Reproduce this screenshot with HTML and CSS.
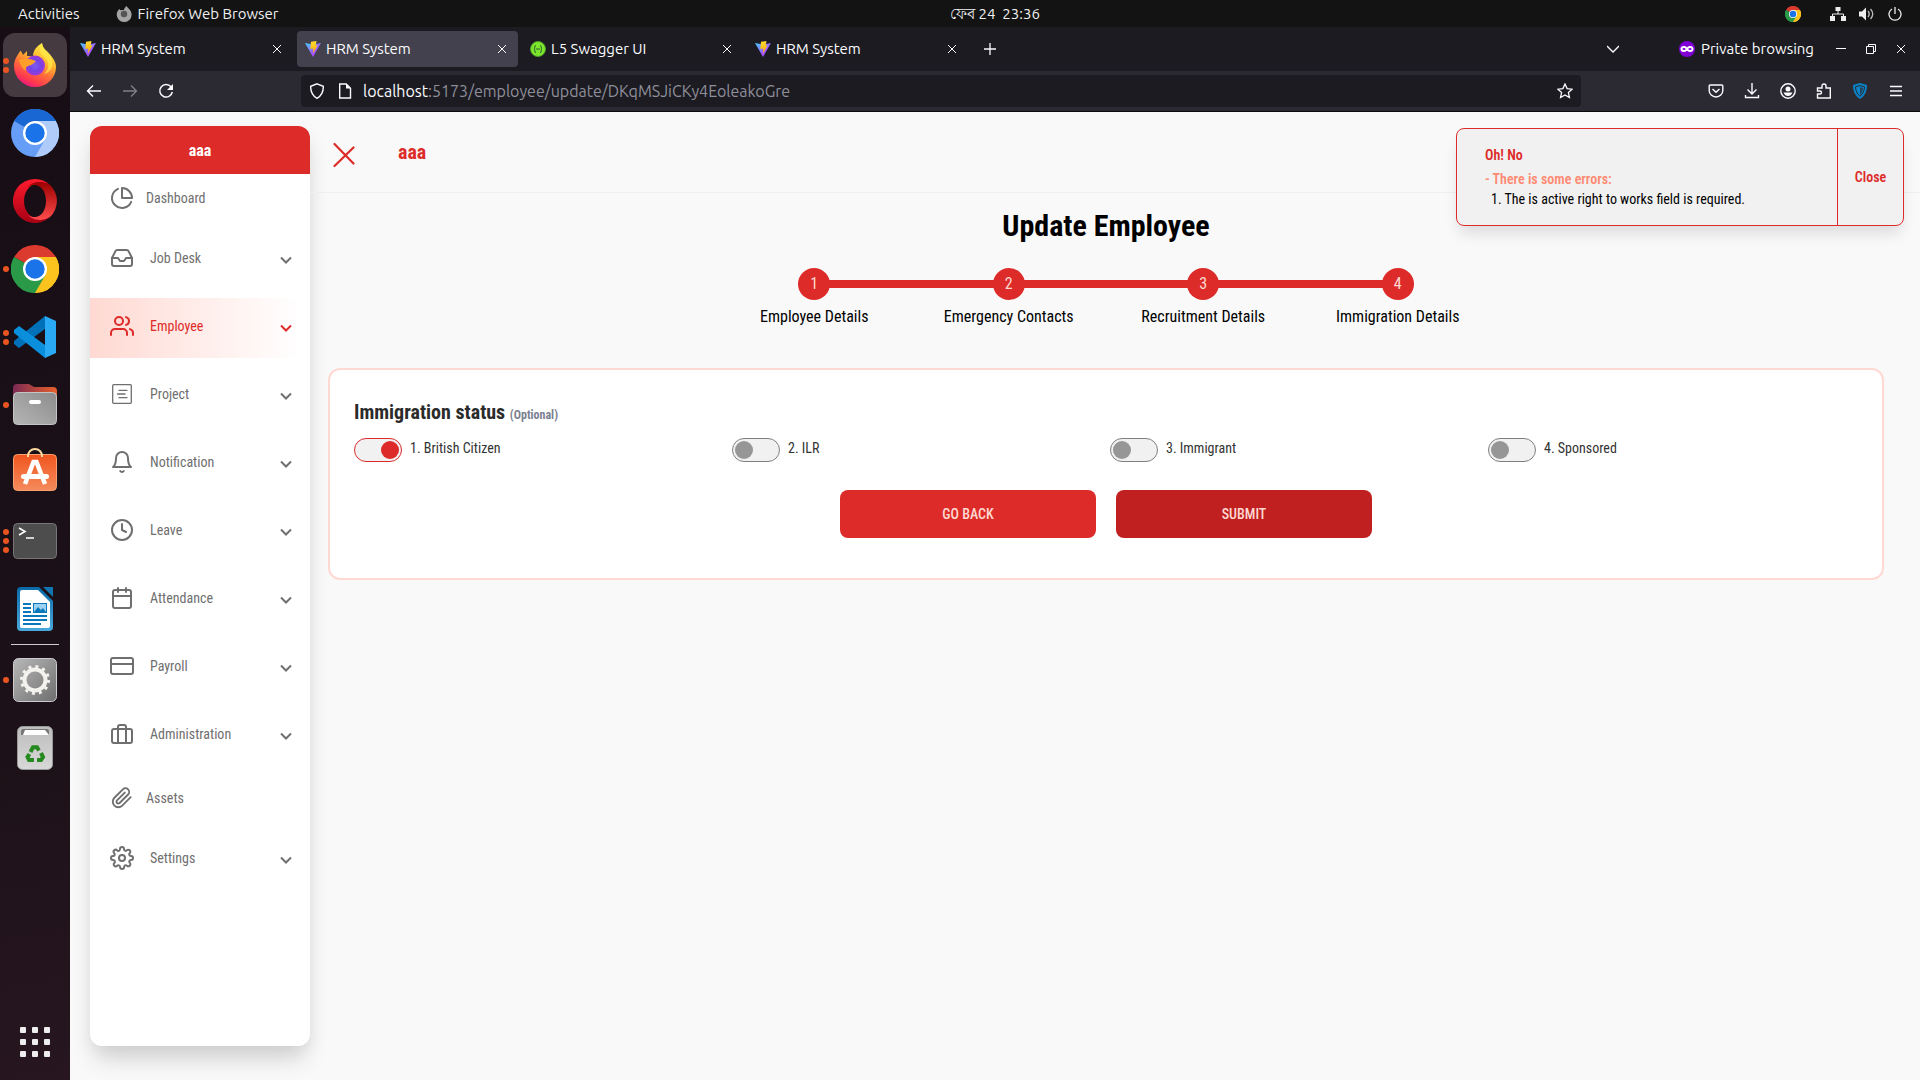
FILE: index.html
```html
<!DOCTYPE html>
<html lang="en">
<head>
<meta charset="utf-8">
<title>HRM System</title>
<link rel="stylesheet" href="styles.css">
</head>
<body>
<svg class="defs" aria-hidden="true">
  <defs>
    <linearGradient id="vg" x1="0" y1="0" x2="1" y2="1"><stop offset="0" stop-color="#41d1ff"/><stop offset=".6" stop-color="#a259ff"/><stop offset="1" stop-color="#bd34fe"/></linearGradient>
    <linearGradient id="vy" x1="0" y1="0" x2="0" y2="1"><stop offset="0" stop-color="#ffdd35"/><stop offset="1" stop-color="#ffa800"/></linearGradient>
    <linearGradient id="fx" x1=".8" y1="0" x2=".3" y2="1"><stop offset="0" stop-color="#fff44f"/><stop offset=".35" stop-color="#ffbd2e"/><stop offset=".6" stop-color="#ff7139"/><stop offset=".85" stop-color="#ff3750"/><stop offset="1" stop-color="#e31587"/></linearGradient>
    <radialGradient id="fp"><stop offset="0" stop-color="#7a5cf0"/><stop offset=".6" stop-color="#7542e5"/><stop offset="1" stop-color="#a237d8"/></radialGradient>
    <linearGradient id="op" x1="0" y1="0" x2="0" y2="1"><stop offset="0" stop-color="#ff1b2d"/><stop offset="1" stop-color="#a70014"/></linearGradient>
    <linearGradient id="op2" x1="0" y1="0" x2="0" y2="1"><stop offset="0" stop-color="#9c0000"/><stop offset="1" stop-color="#ff4b4b"/></linearGradient>
    <linearGradient id="grey" x1="0" y1="0" x2="1" y2="1"><stop offset="0" stop-color="#b8b8b8"/><stop offset="1" stop-color="#6e6e6e"/></linearGradient>
    <linearGradient id="fold" x1="0" y1="0" x2="1" y2="0"><stop offset="0" stop-color="#7b2a55"/><stop offset="1" stop-color="#e9602a"/></linearGradient>
    <linearGradient id="fold2" x1="1" y1="0" x2="0" y2="1"><stop offset="0" stop-color="#8c8c8c"/><stop offset="1" stop-color="#b5b5b5"/></linearGradient>
    <linearGradient id="store" x1="0" y1="0" x2="0" y2="1"><stop offset="0" stop-color="#f0561f"/><stop offset="1" stop-color="#f58a5c"/></linearGradient>
    <linearGradient id="doc" x1="0" y1="0" x2="0" y2="1"><stop offset="0" stop-color="#0a6aa8"/><stop offset="1" stop-color="#4aa9dc"/></linearGradient>
    <linearGradient id="bin" x1="0" y1="0" x2="0" y2="1"><stop offset="0" stop-color="#bdbdbd"/><stop offset="1" stop-color="#d8d8d8"/></linearGradient>
    <symbol id="vite" viewBox="0 0 16 16"><path d="M0 2 8 16 16 2 8 3.5z" fill="url(#vg)"/><path d="M6 .8 11.5 0 10.7 4.6 12.6 4.300 8 12.500 8.300 7.500 5.300 8z" fill="url(#vy)"/></symbol>
    <symbol id="x" viewBox="0 0 10 10"><path d="M1 1l8 8M9 1 1 9" fill="none" stroke="currentColor" stroke-width="1"/></symbol>
    <symbol id="down" viewBox="0 0 12 8"><path d="M1 1.500 6 6.500l5-5" fill="none" stroke="currentColor" stroke-width="2"/></symbol>
    <symbol id="chrome" viewBox="0 0 48 48"><path d="M24 24 3.200 12A24 24 0 0 1 44.800 12z" fill="#db3a2e"/><path d="M24 24 44.800 12A24 24 0 0 1 24 48z" fill="#fcc31e"/><path d="M24 24 24 48A24 24 0 0 1 3.200 12z" fill="#2a9a49"/><path d="M24 12H44.800A24 24 0 0 1 24 48L34.400 30z" fill="#fcc31e"/><path d="M13.600 30 3.200 12A24 24 0 0 0 24 48L34.400 30z" fill="#2a9a49"/><circle cx="24" cy="24" r="12" fill="#fff"/><circle cx="24" cy="24" r="9.700" fill="#1a73e8"/></symbol>
  </defs>
</svg>

<header class="topbar">
  <div class="topbar-left">
    <span>Activities</span>
    <span class="topbar-app">
      <svg width="16" height="16" viewBox="0 0 42 44"><path d="M21 44A20 20 0 0 1 1 23C1 16 5 12 8 8l3 4c4-1 7-1 10 0C21 7 24 3 28 0c3 6 14 12 14 24a20 20 0 0 1-21 20z" fill="#a5a5a5"/><circle cx="21" cy="22" r="9" fill="#555"/></svg>
      Firefox Web Browser
    </span>
  </div>
  <time class="clock">ফেব 24&nbsp; 23:36</time>
  <div class="topbar-right">
    <svg class="tray-chrome" width="16" height="16"><use href="#chrome"/></svg>
    <svg width="16" height="14" viewBox="0 0 16 14"><path d="M5.500 0h5v4h-5zM0 9h5v5H0zM11 9h5v5h-5z" fill="#eee"/><path d="M8 4v3M2.500 9V7h11v2" fill="none" stroke="#eee"/></svg>
    <svg width="16" height="14" viewBox="0 0 16 14"><path d="M0 4.500h3L7 .5v13l-4-4H0z" fill="#eee"/><path d="M9 4q2.500 3 0 6M11.500 2q4.500 5 0 10" fill="none" stroke="#bbb" stroke-width="1.300"/></svg>
    <svg width="14" height="14" viewBox="0 0 14 14"><path d="M4 2a6 6 0 1 0 6 0M7 0v7" fill="none" stroke="#eee" stroke-width="1.300"/></svg>
  </div>
</header>

<div class="desktop">
  <nav class="dock" aria-label="Dock">
    <a class="dock-item active" href="#" aria-label="Firefox"><span class="dots"><i></i><i></i></span>
      <svg width="42" height="44" viewBox="0 0 42 44"><path d="M21 44A21 21 0 0 1 0 23C0 16 4 12 6.500 7.500c1 1.500 2 3 2.500 4.500L13 8v5c2 0 4 0 6 1C19 7 23 3 28 0c1 7 6 9 10 14 3 4 4 7 4 10a21 20 0 0 1-21 20z" fill="url(#fx)"/><circle cx="21" cy="22.500" r="10" fill="url(#fp)"/><path d="M5 17q8-3 17 1-3 4-8 5-3 1-2 5-5-3-7-11z" fill="#ff9f2a"/><path d="M28 0c-4 5-2 10 3 15s4 12-1 16c9-2 10-12 7-18S29 7 28 0z" fill="#ffe94a" opacity=".7"/></svg></a>
    <a class="dock-item" href="#" aria-label="Chromium">
      <svg width="48" height="48" viewBox="0 0 48 48"><circle cx="24" cy="24" r="24" fill="#669df6"/><path d="M24 12H44.800A24 24 0 0 1 24 48L34.400 30z" fill="#aecbfa"/><path d="M24 24 3.200 12A24 24 0 0 1 44.800 12H24L14 30z" fill="#1967d2"/><circle cx="24" cy="24" r="12" fill="#fff"/><circle cx="24" cy="24" r="9.700" fill="#1a73e8"/></svg></a>
    <a class="dock-item" href="#" aria-label="Opera">
      <svg width="44" height="44" viewBox="0 0 44 44"><path d="M22 0a22 22 0 1 0 15 38c-12 7-26-1-26-16S25-1 37 6A22 22 0 0 0 22 0z" fill="url(#op)"/><path d="M15 8c4-5 14-7 22-2a22 22 0 0 1 0 32c-8 5-18 3-22-2 10 6 18-2 18-14S25 2 15 8z" fill="url(#op2)"/></svg></a>
    <a class="dock-item" href="#" aria-label="Chrome"><span class="dots"><i></i></span>
      <svg width="48" height="48"><use href="#chrome"/></svg></a>
    <a class="dock-item" href="#" aria-label="Visual Studio Code"><span class="dots"><i></i><i></i></span>
      <svg width="42" height="42" viewBox="0 0 42 42"><path d="M31 0v13L5 32 0 28v-3z" fill="#0070b8"/><path d="M0 14l5-4 26 19v13L0 17z" fill="#0a8fdc"/><path d="M31 0l11 5v32l-11 5z" fill="#2aaaf5"/></svg></a>
    <a class="dock-item" href="#" aria-label="Files"><span class="dots"><i></i></span>
      <svg width="44" height="42" viewBox="0 0 44 42"><path d="M0 4a4 4 0 0 1 4-4h12l5 3h19a4 4 0 0 1 4 4v10H0z" fill="url(#fold)"/><rect x=".5" y="8.500" width="43" height="32" rx="4" fill="url(#fold2)" stroke="#c4c4c4"/><rect x="16" y="16" width="12" height="4" rx="2" fill="#fff"/></svg></a>
    <a class="dock-item" href="#" aria-label="Software">
      <svg width="44" height="50" viewBox="0 0 44 50"><rect x=".5" y="6.500" width="43" height="36" rx="4" fill="url(#store)" stroke="#f9a06f"/><path d="M15 9V8a7 7 0 0 1 14 0v1" fill="none" stroke="#fbdba0" stroke-width="2"/><path d="M12 36 20.500 14h3L32 36" fill="none" stroke="#fff" stroke-width="4.500"/><rect x="8" y="26" width="28" height="5" rx="2.500" fill="#fff"/></svg></a>
    <a class="dock-item" href="#" aria-label="Terminal"><span class="dots"><i></i><i></i><i></i></span>
      <svg width="44" height="36" viewBox="0 0 44 36"><rect x=".5" y=".5" width="43" height="35" rx="4" fill="#4d4d4d" stroke="#777"/><path d="M6 5l6 3.500L6 12M13 15h8" fill="none" stroke="#fff" stroke-width="1.600"/></svg></a>
    <a class="dock-item" href="#" aria-label="Writer">
      <svg width="36" height="44" viewBox="0 0 36 44"><path d="M4 0h18l14 14v26a4 4 0 0 1-4 4H4a4 4 0 0 1-4-4V4a4 4 0 0 1 4-4z" fill="url(#doc)"/><path d="M26 0h10v10z" fill="#1275b0"/><path d="M3 5a2 2 0 0 1 2-2h16l12 12v24a2 2 0 0 1-2 2H5a2 2 0 0 1-2-2z" fill="#fff"/><path d="M6 17h8M6 21h8M6 25h8M6 29h24M6 33h24M6 37h18" stroke="#0a78bb" stroke-width="2"/><rect x="16.500" y="16.500" width="13" height="9" fill="#9dd2f2" stroke="#0a78bb"/><path d="M17 25l4-5 3 3 2-2 3 4z" fill="#0a78bb"/></svg></a>
    <hr class="dock-rule">
    <a class="dock-item" href="#" aria-label="Settings"><span class="dots"><i></i></span>
      <svg width="44" height="44" viewBox="0 0 44 44"><rect x=".5" y=".5" width="43" height="43" rx="5" fill="url(#grey)" stroke="#ccc"/><circle cx="22" cy="22" r="10.500" fill="none" stroke="#f4f2ee" stroke-width="4"/><circle cx="22" cy="22" r="13.500" fill="none" stroke="#f4f2ee" stroke-width="3" stroke-dasharray="3 4.070"/></svg></a>
    <a class="dock-item" href="#" aria-label="Trash">
      <svg width="36" height="44" viewBox="0 0 36 44"><rect x=".5" y=".5" width="35" height="43" rx="5" fill="url(#bin)" stroke="#999"/><path d="M4 9V5q0-2 2-2h24q2 0 2 2v4z" fill="#777"/><path d="M6 9l2-5h20l4 5z" fill="#fff"/><g fill="none" stroke="#26891f" stroke-width="4"><path d="M13.500 26l2.500-4.800h4l2 3.300M24 27l2 4-2 3h-4M17 34h-5L10.500 31l2-3"/></g></svg></a>
    <a class="dock-apps" href="#" aria-label="Show applications">
      <svg width="30" height="30" viewBox="0 0 30 30" fill="#eee"><g id="r"><rect width="6" height="6" rx="1"/><rect x="12" width="6" height="6" rx="1"/><rect x="24" width="6" height="6" rx="1"/></g><use href="#r" y="12"/><use href="#r" y="24"/></svg></a>
  </nav>

  <div class="browser">
    <div class="tabs">
      <div class="tab"><svg width="16" height="16"><use href="#vite"/></svg><span>HRM System</span><button aria-label="Close tab"><svg width="10" height="10"><use href="#x"/></svg></button></div>
      <div class="tab selected"><svg width="16" height="16"><use href="#vite"/></svg><span>HRM System</span><button aria-label="Close tab"><svg width="10" height="10"><use href="#x"/></svg></button></div>
      <div class="tab"><svg width="16" height="16" viewBox="0 0 16 16"><circle cx="8" cy="8" r="7.500" fill="#7be62c" stroke="#4f9f2a"/><path d="M6 4.500Q4.800 4.500 4.800 6T4 8q.8 0 .8 2T6 11.500M10 4.500q1.200 0 1.200 1.500T12 8q-.8 0-.8 2T10 11.500M6 8h4" fill="none" stroke="#2f5f2a"/></svg><span>L5 Swagger UI</span><button aria-label="Close tab"><svg width="10" height="10"><use href="#x"/></svg></button></div>
      <div class="tab"><svg width="16" height="16"><use href="#vite"/></svg><span>HRM System</span><button aria-label="Close tab"><svg width="10" height="10"><use href="#x"/></svg></button></div>
      <button class="new-tab" aria-label="New tab"><svg width="12" height="12" viewBox="0 0 12 12"><path d="M6 0v12M0 6h12" stroke="currentColor" stroke-width="1.300"/></svg></button>
      <div class="window-tools">
        <button class="list-tabs" aria-label="List all tabs"><svg width="12" height="8" viewBox="0 0 12 8"><path d="M0 1l6 6 6-6" fill="none" stroke="currentColor" stroke-width="1.300"/></svg></button>
        <span class="private"><svg width="16" height="16" viewBox="0 0 16 16"><circle cx="8" cy="8" r="8" fill="#8000d7"/><path d="M1.500 8c0-3 4-4 6.500-1.500C10.500 4 14.500 5 14.500 8S11 12 8 9.800C5 12 1.500 11 1.500 8z" fill="#fff"/><ellipse cx="5" cy="8" rx="1.600" ry="1" fill="#8000d7"/><ellipse cx="11" cy="8" rx="1.600" ry="1" fill="#8000d7"/></svg>Private browsing</span>
        <button aria-label="Minimize"><svg width="10" height="10" viewBox="0 0 10 10"><path d="M0 4.500h10" stroke="currentColor"/></svg></button>
        <button aria-label="Restore"><svg width="10" height="10" viewBox="0 0 10 10"><path d="M.5 2.500h7v7h-7zM2.500 2.500v-2h7v7h-2" fill="none" stroke="currentColor"/></svg></button>
        <button aria-label="Close window"><svg width="10" height="10"><use href="#x"/></svg></button>
      </div>
    </div>

    <div class="navbar">
      <div class="nav-buttons">
        <button aria-label="Back"><svg width="16" height="14" viewBox="0 0 16 14"><path d="M15 7H1.500M7 1.500 1.500 7 7 12.500" fill="none" stroke="currentColor" stroke-width="1.400"/></svg></button>
        <button class="dim" aria-label="Forward"><svg width="16" height="14" viewBox="0 0 16 14"><path d="M1 7h13.500M9 1.500 14.500 7 9 12.500" fill="none" stroke="currentColor" stroke-width="1.400"/></svg></button>
        <button aria-label="Reload"><svg width="16" height="16" viewBox="0 0 16 16"><path d="M13 3.800A6.300 6.300 0 1 0 14.300 9" fill="none" stroke="currentColor" stroke-width="1.500"/><path d="M15 1v6H9z" fill="currentColor"/></svg></button>
      </div>
      <div class="urlbar">
        <svg width="16" height="16" viewBox="0 0 16 16"><path d="M8 .8l6.300 2.500c.2 5.500-1.800 9.500-6.300 12-4.500-2.500-6.500-6.500-6.300-12z" fill="none" stroke="currentColor" stroke-width="1.400"/></svg>
        <svg width="16" height="16" viewBox="0 0 16 16"><path d="M2.700 1h6.500l4.300 4.300V15H2.700z" fill="none" stroke="currentColor" stroke-width="1.400"/><path d="M9 .5v5h5z" fill="currentColor"/></svg>
        <span class="url">localhost<span>:5173/employee/update/DKqMSJiCKy4EoleakoGre</span></span>
        <svg width="16" height="16" viewBox="0 0 16 16"><path d="M8 1l2.100 4.600 5 .6-3.700 3.400 1 4.900L8 12l-4.400 2.500 1-4.900L.9 6.200l5-.6z" fill="none" stroke="currentColor" stroke-width="1.300"/></svg>
      </div>
      <div class="extensions">
        <button aria-label="Pocket"><svg width="16" height="16" viewBox="0 0 16 16"><path d="M1.200 3q0-1 1-1h11.600q1 0 1 1v4.500a6.800 6.500 0 0 1-13.600 0zM4.500 6 8 9.300 11.500 6" fill="none" stroke="currentColor" stroke-width="1.400"/></svg></button>
        <button aria-label="Downloads"><svg width="16" height="16" viewBox="0 0 16 16"><path d="M8 0v10.500M3.500 6.500 8 11l4.500-4.500M1.500 12v2.500h13V12" fill="none" stroke="currentColor" stroke-width="1.400"/></svg></button>
        <button aria-label="Account"><svg width="16" height="16" viewBox="0 0 16 16"><circle cx="8" cy="8" r="7.200" fill="none" stroke="currentColor" stroke-width="1.400"/><circle cx="8" cy="6" r="2.500" fill="currentColor"/><path d="M3.500 9.500h9Q11 13 8 13T3.500 9.500z" fill="currentColor"/></svg></button>
        <button aria-label="Extensions"><svg width="16" height="16" viewBox="0 0 16 16"><path d="M1.500 5H6V3q0-2 2-2t2 2v2h4.300v10H1.500v-4H4q1.500 0 1.500-1.500T4 8H1.500z" fill="none" stroke="currentColor" stroke-width="1.400"/></svg></button>
        <button aria-label="Security shield"><svg width="16" height="16" viewBox="0 0 16 16"><path d="M8 0l7 2c0 6-2 11-7 14C3 13 1 8 1 2z" fill="#0a84c8"/><path d="M8 2.500l4.500 1.300C12.300 8 11 11 8 13.300 5 11 3.700 8 3.500 3.800z" fill="none" stroke="#2b2a33"/><path d="M8 4v8Q10.500 10 11 5z" fill="#2b2a33" opacity=".7"/></svg></button>
        <button aria-label="Menu"><svg width="12" height="12" viewBox="0 0 12 12"><path d="M0 1.500h12M0 6h12M0 10.500h12" stroke="currentColor" stroke-width="1.400"/></svg></button>
      </div>
    </div>

    <div class="app">
      <aside class="sidebar">
        <div class="brand">aaa</div>
        <nav class="menu" aria-label="Main">
          <a class="menu-link" href="#"><svg class="ico" viewBox="0 0 24 24"><path d="M21.200 15.900A10 10 0 1 1 8 2.800M22 12A10 10 0 0 0 12 2v10z"/></svg>Dashboard</a>
          <button class="menu-group"><svg class="ico" viewBox="0 0 24 24"><path d="M22 12h-6l-2 3h-4l-2-3H2"/><path d="M5.450 5.110 2 12v6a2 2 0 0 0 2 2h16a2 2 0 0 0 2-2v-6l-3.450-6.890A2 2 0 0 0 16.760 4H7.240a2 2 0 0 0-1.790 1.110z"/></svg><span>Job Desk</span><svg class="caret"><use href="#down"/></svg></button>
          <button class="menu-group current"><svg class="ico" viewBox="0 0 24 24"><path d="M17 21v-2a4 4 0 0 0-4-4H5a4 4 0 0 0-4 4v2"/><circle cx="9" cy="7" r="4"/><path d="M23 21v-2a4 4 0 0 0-3-3.870M16 3.130a4 4 0 0 1 0 7.750"/></svg><span>Employee</span><svg class="caret"><use href="#down"/></svg></button>
          <button class="menu-group"><svg class="ico thin" viewBox="0 0 24 24"><rect x="2.700" y="2.700" width="18.600" height="18.600" rx="1"/><path d="M9 8.300h8M7.500 12H15M9 15.700h8"/></svg><span>Project</span><svg class="caret"><use href="#down"/></svg></button>
          <button class="menu-group"><svg class="ico" viewBox="0 0 24 24"><path d="M18 8A6 6 0 0 0 6 8c0 7-3 9-3 9h18s-3-2-3-9M13.730 21a2 2 0 0 1-3.460 0"/></svg><span>Notification</span><svg class="caret"><use href="#down"/></svg></button>
          <button class="menu-group"><svg class="ico" viewBox="0 0 24 24"><circle cx="12" cy="12" r="10"/><path d="M12 6v6l4 2"/></svg><span>Leave</span><svg class="caret"><use href="#down"/></svg></button>
          <button class="menu-group"><svg class="ico" viewBox="0 0 24 24"><rect x="3" y="4" width="18" height="18" rx="2"/><path d="M16 2v4M8 2v4M3 10h18"/></svg><span>Attendance</span><svg class="caret"><use href="#down"/></svg></button>
          <button class="menu-group"><svg class="ico" viewBox="0 0 24 24"><rect x="1" y="4" width="22" height="16" rx="2"/><path d="M1 10h22"/></svg><span>Payroll</span><svg class="caret"><use href="#down"/></svg></button>
          <button class="menu-group"><svg class="ico" viewBox="0 0 24 24"><rect x="2" y="7" width="20" height="14" rx="2"/><path d="M16 21V5a2 2 0 0 0-2-2h-4a2 2 0 0 0-2 2v16"/></svg><span>Administration</span><svg class="caret"><use href="#down"/></svg></button>
          <a class="menu-link" href="#"><svg class="ico" viewBox="-1 -1 26 26"><path d="M21.440 11.050l-9.190 9.190a6 6 0 0 1-8.490-8.490l9.190-9.190a4 4 0 0 1 5.660 5.660l-9.200 9.190a2 2 0 0 1-2.830-2.830l8.490-8.480"/></svg>Assets</a>
          <button class="menu-group"><svg class="ico" viewBox="0 0 24 24"><circle cx="12" cy="12" r="3"/><path d="M19.400 15a1.650 1.650 0 0 0 .33 1.820l.06.06a2 2 0 1 1-2.830 2.830l-.06-.06a1.650 1.650 0 0 0-2.800 1.170V21a2 2 0 0 1-4 0v-.09A1.650 1.650 0 0 0 9 19.400a1.650 1.650 0 0 0-1.820.33l-.06.06a2 2 0 1 1-2.830-2.830l.06-.06A1.650 1.650 0 0 0 3.180 14H3a2 2 0 0 1 0-4h.09A1.650 1.650 0 0 0 4.600 9a1.650 1.650 0 0 0-.33-1.820l-.06-.06a2 2 0 1 1 2.830-2.830l.06.06A1.650 1.650 0 0 0 10 3.180V3a2 2 0 0 1 4 0v.09a1.650 1.650 0 0 0 2.820 1.260l.06-.06a2 2 0 1 1 2.830 2.830l-.06.06A1.650 1.650 0 0 0 20.820 10H21a2 2 0 0 1 0 4h-.09a1.650 1.650 0 0 0-1.510 1z"/></svg><span>Settings</span><svg class="caret"><use href="#down"/></svg></button>
        </nav>
      </aside>

      <div class="page">
        <header class="page-head">
          <button class="menu-close" aria-label="Close menu"><svg width="22" height="26" viewBox="0 0 22 26"><path d="M1.500 2l19 19.500M20.500 5.500 1.500 24" fill="none" stroke="currentColor" stroke-width="2.200" stroke-linecap="round"/></svg></button>
          <span class="company">aaa</span>
        </header>
        <main class="content">
          <h1>Update Employee</h1>
          <ol class="steps">
            <li><b>1</b><span>Employee Details</span></li>
            <li><b>2</b><span>Emergency Contacts</span></li>
            <li><b>3</b><span>Recruitment Details</span></li>
            <li><b>4</b><span>Immigration Details</span></li>
          </ol>
          <form class="card">
            <h2>Immigration status <small>(Optional)</small></h2>
            <div class="options">
              <label class="option"><input type="checkbox" checked><span>1. British Citizen</span></label>
              <label class="option"><input type="checkbox"><span>2. ILR</span></label>
              <label class="option"><input type="checkbox"><span>3. Immigrant</span></label>
              <label class="option"><input type="checkbox"><span>4. Sponsored</span></label>
            </div>
            <div class="actions">
              <button type="button">GO BACK</button>
              <button type="button" class="submit">SUBMIT</button>
            </div>
          </form>
        </main>
      </div>

      <div class="toast" role="alert">
        <div class="toast-body">
          <strong>Oh! No</strong>
          <p>- There is some errors:</p>
          <div class="toast-error">1. The is active right to works field is required.</div>
        </div>
        <button>Close</button>
      </div>
    </div>
  </div>
</div>
</body>
</html>
```

FILE: styles.css
```css
* { box-sizing: border-box; }

body {
  margin: 0;
  min-height: 100vh;
  display: flex;
  flex-direction: column;
  background: #f9f9f9;
  color: #000;
  font: 16px/24px "Roboto Condensed", "Liberation Sans Narrow", Roboto, sans-serif;
}

button {
  padding: 0;
  border: 0;
  background: none;
  color: inherit;
  font: inherit;
  cursor: pointer;
}

a { color: inherit; text-decoration: none; }
svg { display: block; flex: none; }
.defs { position: absolute; width: 0; height: 0; }

/* system bar */
.topbar {
  display: grid;
  grid-template-columns: 1fr auto 1fr;
  align-items: center;
  height: 27px;
  padding: 0 12px 0 18px;
  background: #131313;
  color: #f0f0f0;
  font: 15px/20px Ubuntu, "Noto Sans", sans-serif;
}
.topbar-left { display: flex; gap: 36px; }
.topbar-app { display: flex; align-items: center; gap: 6px; }
.clock { padding-left: 64px; white-space: nowrap; }
.topbar-right { display: flex; justify-content: flex-end; align-items: center; gap: 13px; padding-right: 6px; }
.tray-chrome { margin-right: 16px; }

.desktop { display: flex; flex: 1; }

/* dock */
.dock {
  flex: none;
  width: 70px;
  display: flex;
  flex-direction: column;
  padding-top: 4px;
  background: linear-gradient(170deg, #170d14 0%, #1c1118 65%, #27161f 100%);
}
.dock-item {
  position: relative;
  display: grid;
  place-items: center;
  height: 64px;
  margin: 2px 3px;
  border-radius: 12px;
}
.dock-item.active { background: #453a40; }
.dots {
  position: absolute;
  left: 0;
  top: 0;
  bottom: 0;
  display: flex;
  flex-direction: column;
  justify-content: center;
  gap: 3px;
}
.dots i { width: 6px; height: 6px; border-radius: 50%; background: #e95420; }
.dock-rule { width: 48px; height: 1px; margin: 1px auto; border: 0; background: #cfcacd; }
.dock-apps { margin: auto auto 23px; }

/* browser chrome */
.browser { flex: 1; min-width: 0; display: flex; flex-direction: column; }
.tabs, .navbar { display: flex; align-items: center; color: #fbfbfe; font: 15px/20px Ubuntu, "Noto Sans", sans-serif; }
.tabs { height: 44px; padding: 0 14px 0 2px; gap: 4px; background: #1c1b22; }
.tab { display: flex; align-items: center; gap: 5px; width: 221px; height: 36px; padding: 0 11px 0 8px; border-radius: 4px; }
.tab span { flex: 1; white-space: nowrap; }
.tab.selected { background: #42414d; }
.new-tab { width: 36px; display: grid; place-items: center; }
.window-tools { display: flex; align-items: center; gap: 20px; margin-left: auto; }
.list-tabs { margin-right: 40px; }
.private { display: flex; align-items: center; gap: 6px; margin-right: 2px; }

.navbar { height: 41px; padding-right: 16px; background: #2b2a33; border-bottom: 1px solid #0c0c0d; }
.nav-buttons { display: flex; gap: 20px; width: 231px; padding-left: 16px; }
.nav-buttons button, .extensions button { width: 16px; height: 16px; display: grid; place-items: center; }
.dim { opacity: .4; }
.urlbar { flex: 1; display: flex; align-items: center; gap: 12px; max-width: 1280px; height: 32px; padding: 0 8px; border-radius: 4px; background: #1c1b22; }
.url { flex: 1; margin-left: -2px; font-size: 16px; }
.url span { color: #8f8f9a; }
.extensions { display: flex; gap: 20px; margin-left: auto; }

/* application */
.app { position: relative; flex: 1; display: flex; padding-left: 20px; background: #f9f9f9; }

.sidebar {
  flex: none;
  width: 220px;
  margin: 14px 0 34px;
  border-radius: 12px;
  background: #fff;
  box-shadow: 0 20px 25px -5px rgba(0, 0, 0, .1), 0 8px 20px -2px rgba(0, 0, 0, .1);
}
.brand { height: 48px; border-radius: 12px 12px 0 0; background: #dd2b29; color: #fff; font-weight: 700; line-height: 50px; text-align: center; }
.menu { display: flex; flex-direction: column; gap: 8px; color: #6f6f6f; font-size: 14px; }
.menu-link, .menu-group { display: flex; align-items: center; padding-left: 20px; }
.menu-link { height: 48px; gap: 12px; }
.menu-group { height: 60px; gap: 16px; padding: 0 18px 4px 20px; text-align: left; }
.menu-group span { flex: 1; }
.menu-group.current { background: linear-gradient(90deg, #ffd9d2, #fff 95%); color: #dd2b29; }
.ico { width: 24px; height: 24px; fill: none; stroke: currentColor; stroke-width: 2; stroke-linecap: round; stroke-linejoin: round; }
.ico.thin { stroke-width: 1.3; }
.caret { width: 12px; height: 8px; margin-top: 4px; }

.page { flex: 1; min-width: 0; }
.page-head { display: flex; align-items: center; gap: 43px; height: 81px; padding: 0 23px; border-bottom: 1px solid #efefef; color: #dd2b29; }
.menu-close { margin-top: 6px; }
.company { font-size: 20px; font-weight: 700; }

.content { padding: 15px 36px 34px 18px; }
h1 { margin: 0; font-size: 30px; line-height: 36px; font-weight: 700; text-align: center; }

.steps { position: relative; z-index: 0; display: flex; max-width: 778px; margin: 24px auto 39px; padding: 0; list-style: none; }
.steps li { position: relative; flex: 1; display: flex; flex-direction: column; align-items: center; gap: 5px; }
.steps b { width: 32px; height: 32px; border-radius: 50%; background: #dd2b29; color: #ffd9d2; font-weight: 400; line-height: 32px; text-align: center; }
.steps li + li::before { content: ""; position: absolute; z-index: -1; top: 12px; right: 50%; width: 100%; height: 8px; background: #dd2b29; }

.card { padding: 28px 24px 40px; border: 2px solid #ffd9d2; border-radius: 12px; background: #fff; }
h2 { margin: 0; color: #2b2b2b; font-size: 20px; line-height: 28px; font-weight: 700; }
h2 small { color: #7b8190; font-size: 12px; line-height: 12px; }
.options { display: grid; grid-template-columns: repeat(4, 1fr); gap: 8px; margin-top: 12px; }
.option { display: flex; gap: 8px; color: #333; font-size: 14px; line-height: 20px; }
.option input { appearance: none; width: 48px; height: 24px; margin: 0; padding: 2px; border: 1px solid #808080; border-radius: 12px; background: #f1f1f1; }
.option input::before { content: ""; display: block; width: 18px; height: 18px; border-radius: 50%; background: #969696; }
.option input:checked { border-color: #dd2b29; }
.option input:checked::before { margin-left: auto; background: #dd2b29; }
.actions { display: flex; justify-content: center; gap: 20px; margin-top: 28px; }
.actions button { width: 256px; height: 48px; border-radius: 8px; background: #dd2b29; color: #ffd9d2; font-size: 14px; font-weight: 500; }
.actions .submit { background: #c02020; }

.toast {
  position: absolute;
  top: 16px;
  right: 16px;
  display: flex;
  width: 448px;
  border: 1px solid #dd2b29;
  border-radius: 8px;
  background: #f1f1f1;
  box-shadow: 0 10px 15px -3px rgba(0, 0, 0, .12);
  font-size: 14px;
  line-height: 20px;
}
.toast-body { flex: 1; padding: 16px 28px; }
.toast strong { color: #dd2b29; font-weight: 600; }
.toast p { margin: 4px 0 0; color: #ff8a73; font-weight: 600; }
.toast-error { padding-left: 6px; }
.toast button { width: 66px; border-left: 1px solid #dd2b29; color: #dd2b29; font-weight: 600; }
```
